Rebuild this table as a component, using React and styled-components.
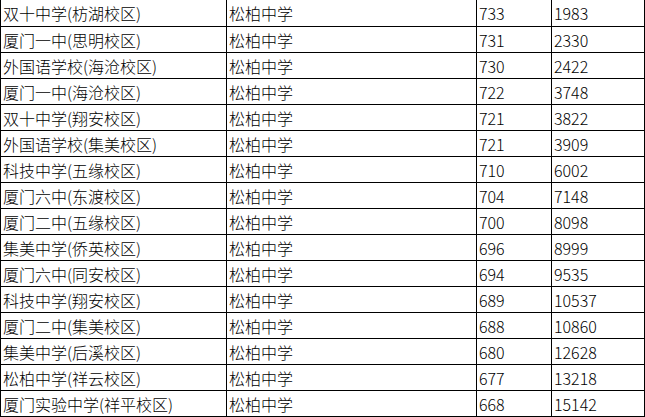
import styled, { createGlobalStyle } from 'styled-components';

const GlobalStyle = createGlobalStyle`
  html, body {
    margin: 0;
    padding: 0;
    background: #fff;
  }
`;

const rows = [
  ['双十中学(枋湖校区)', '松柏中学', '733', '1983'],
  ['厦门一中(思明校区)', '松柏中学', '731', '2330'],
  ['外国语学校(海沧校区)', '松柏中学', '730', '2422'],
  ['厦门一中(海沧校区)', '松柏中学', '722', '3748'],
  ['双十中学(翔安校区)', '松柏中学', '721', '3822'],
  ['外国语学校(集美校区)', '松柏中学', '721', '3909'],
  ['科技中学(五缘校区)', '松柏中学', '710', '6002'],
  ['厦门六中(东渡校区)', '松柏中学', '704', '7148'],
  ['厦门二中(五缘校区)', '松柏中学', '700', '8098'],
  ['集美中学(侨英校区)', '松柏中学', '696', '8999'],
  ['厦门六中(同安校区)', '松柏中学', '694', '9535'],
  ['科技中学(翔安校区)', '松柏中学', '689', '10537'],
  ['厦门二中(集美校区)', '松柏中学', '688', '10860'],
  ['集美中学(后溪校区)', '松柏中学', '680', '12628'],
  ['松柏中学(祥云校区)', '松柏中学', '677', '13218'],
  ['厦门实验中学(祥平校区)', '松柏中学', '668', '15142'],
];

const Sheet = styled.div`
  display: grid;
  grid-template-columns: 226px 250px 75px 93px;
  width: 644px;
  border-right: 1px solid #000;
  font-family: 'Noto Sans CJK SC', 'Noto Sans', sans-serif;
  font-size: 16px;
  font-weight: 300;
  color: #000;
`;

const Cell = styled.div`
  box-sizing: border-box;
  height: ${(p) => (p.$first ? 27 : 26)}px;
  display: flex;
  align-items: center;
  padding-left: 2px;
  border-left: 1px solid #000;
  border-bottom: 1px solid #000;
  line-height: 1;
  white-space: nowrap;
  overflow: hidden;
`;

export default function App() {
  return (
    <>
      <GlobalStyle />
      <Sheet>
        {rows.map((row, i) =>
          row.map((text, j) => (
            <Cell key={`${i}-${j}`} $first={i === 0}>
              {text}
            </Cell>
          )),
        )}
      </Sheet>
    </>
  );
}
